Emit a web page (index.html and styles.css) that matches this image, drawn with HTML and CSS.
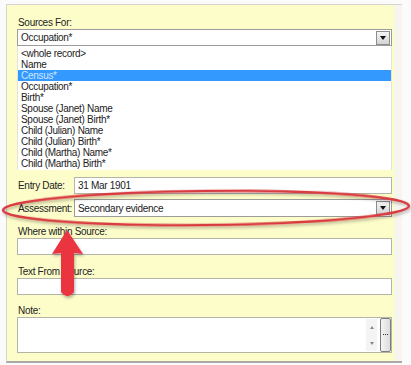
FILE: index.html
```html
<!DOCTYPE html>
<html lang="en">
<head>
    <meta charset="UTF-8">
    <title>Sources For</title>
    <link rel="stylesheet" href="styles.css">
</head>
<body>
    <div class="window">
        <div class="panel">
            <div class="label">Sources For:</div>
            <div class="combo">
                <span class="combo-text">Occupation*</span>
                <span class="drop-btn"></span>
            </div>
            <ul class="list">
                <li>&lt;whole record&gt;</li>
                <li>Name</li>
                <li class="selected">Census*</li>
                <li>Occupation*</li>
                <li>Birth*</li>
                <li>Spouse (Janet) Name</li>
                <li>Spouse (Janet) Birth*</li>
                <li>Child (Julian) Name</li>
                <li>Child (Julian) Birth*</li>
                <li>Child (Martha) Name*</li>
                <li>Child (Martha) Birth*</li>
            </ul>

            <div class="row row-date">
                <span class="row-label">Entry Date:</span>
                <div class="field">31 Mar 1901</div>
            </div>
            <div class="row row-assess">
                <span class="row-label">Assessment:</span>
                <div class="combo combo-inline">
                    <span class="combo-text">Secondary evidence</span>
                    <span class="drop-btn"></span>
                </div>
            </div>

            <div class="label label-where">Where within Source:</div>
            <div class="field field-wide"></div>

            <div class="label label-text">Text From Source:</div>
            <div class="field field-wide"></div>

            <div class="label label-note">Note:</div>
            <div class="note">
                <div class="spin">
                    <span class="spin-up"></span>
                    <span class="spin-down"></span>
                </div>
                <div class="scroll-btn"></div>
            </div>
        </div>
    </div>

    <!-- annotation drawn over the dialog -->
    <svg class="markup" width="411" height="365" viewBox="0 0 411 365">
        <defs>
            <filter id="shadow" x="-10%" y="-10%" width="120%" height="130%">
                <feDropShadow dx="1" dy="2" stdDeviation="1.5" flood-color="#000" flood-opacity="0.3"/>
            </filter>
        </defs>
        <ellipse cx="206" cy="208" rx="203" ry="17" transform="rotate(-0.6 206 208)"
                 fill="none" stroke="#d83a40" stroke-width="2.5" filter="url(#shadow)"/>
        <g filter="url(#shadow)" fill="#ea3440">
            <path d="M67 230 L83 254 L74 253 L74 292 Q67.5 300 61 292 L61 253 L52 254 Z"/>
        </g>
    </svg>
</body>
</html>
```

FILE: styles.css
```css
body {
    margin: 0;
    background: #fbfbfb;
    font-family: "Liberation Sans", Arial, sans-serif;
    font-size: 10px;
    letter-spacing: -0.3px;
    color: #222;
}
.window {
    position: relative;
    width: 387px;
    margin: 4px 0 0 6px;
    border-top: 1px solid #d4d4d4;
    border-left: 1px solid #d4d4d4;
    border-bottom: 2px solid #a9a9a9;
    background: #f6f6ee;
    padding-right: 8px;
}
.panel {
    background: #fdfdca;
    padding: 12px 2px 8px 10px;
}
.label {
    height: 12px;
    line-height: 12px;
    padding-left: 1px;
}
.combo {
    display: flex;
    align-items: center;
    height: 15px;
    border: 1px solid #9c9c9c;
    background: #fff;
    padding: 0 1px 0 3px;
}
.combo-text {
    flex: 1;
}
.drop-btn {
    width: 12px;
    height: 12px;
    border: 1px solid #8d8d8d;
    background: linear-gradient(#f4f4f4, #d4d4d4);
    position: relative;
}
.drop-btn::after {
    content: "";
    position: absolute;
    left: 3px;
    top: 4px;
    border-left: 3px solid transparent;
    border-right: 3px solid transparent;
    border-top: 4px solid #111;
}
.list {
    list-style: none;
    margin: 0;
    padding: 2px 0 0;
    height: 122px;
    background: #fff;
    border-left: 1px solid #e4e4d8;
    border-right: 1px solid #e4e4d8;
}
.list li {
    height: 11px;
    line-height: 11px;
    padding-left: 3px;
}
.list li.selected {
    background: #3399ff;
    color: #cfe6ff;
}
.row {
    display: flex;
    align-items: center;
}
.row-date {
    margin-top: 7px;
}
.row-assess {
    margin-top: 5px;
}
.row-label {
    width: 56px;
    padding-left: 1px;
}
.field {
    height: 15px;
    line-height: 15px;
    border: 1px solid #b4b4a8;
    background: #fff;
    padding-left: 3px;
    flex: 1;
}
.combo-inline {
    flex: 1;
    height: 16px;
}
.label-where {
    margin-top: 9px;
}
.label-text {
    margin-top: 11px;
}
.label-note {
    margin-top: 10px;
}
.note {
    display: flex;
    justify-content: flex-end;
    align-items: stretch;
    height: 34px;
    border: 1px solid #b4b4a8;
    background: #fff;
}
.spin {
    width: 11px;
    margin: 1px 3px 1px 0;
    background: #f4f4f4;
    display: flex;
    flex-direction: column;
    justify-content: space-around;
    align-items: center;
}
.spin-up {
    border-left: 2px solid transparent;
    border-right: 2px solid transparent;
    border-bottom: 3px solid #888;
}
.spin-down {
    border-left: 2px solid transparent;
    border-right: 2px solid transparent;
    border-top: 3px solid #888;
}
.scroll-btn {
    width: 9px;
    border: 1px solid #7d7d7d;
    border-radius: 2px;
    background: linear-gradient(to right, #f4f4f4, #dcdcdc);
    position: relative;
}
.scroll-btn::after {
    content: "";
    position: absolute;
    left: 2px;
    top: 15px;
    width: 5px;
    height: 1px;
    border-top: 1px dotted #333;
}
.markup {
    position: absolute;
    left: 0;
    top: 0;
}
```
